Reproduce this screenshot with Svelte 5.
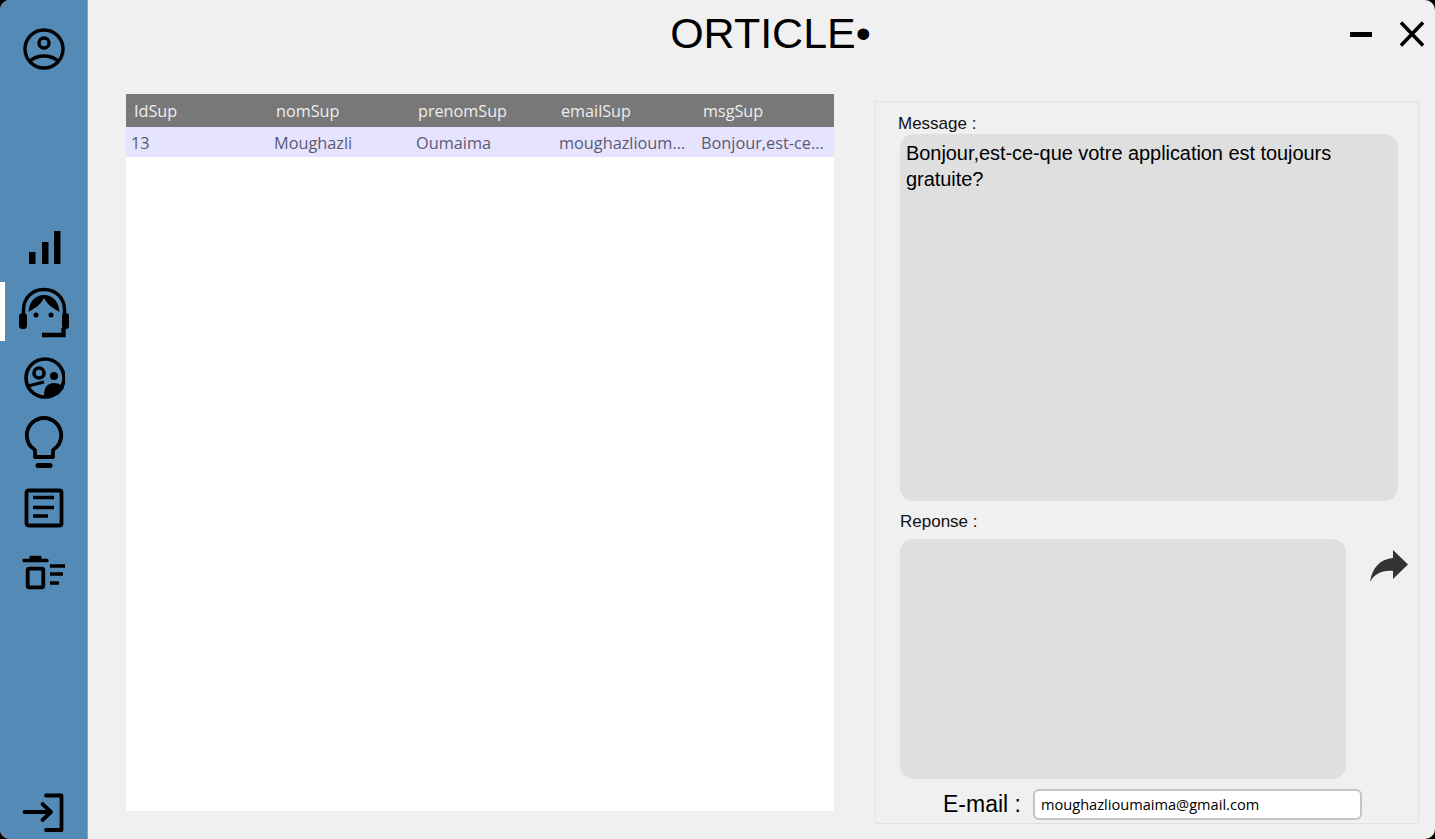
<script>
	const columns = ['IdSup', 'nomSup', 'prenomSup', 'emailSup', 'msgSup'];
	const rows = [
		['13', 'Moughazli', 'Oumaima', 'moughazlioum...', 'Bonjour,est-ce...']
	];
</script>

<div class="window">
	<aside class="sidebar">
		<button class="nav-btn profile" type="button" aria-label="Profil">
			<svg viewBox="0 0 42 42" width="42" height="42" fill="none" stroke="#000" stroke-width="3.400">
				<circle cx="21" cy="21" r="19" />
				<circle cx="21" cy="15" r="5" />
				<path d="M7 33C11 29.500 16 28 21 28s10 1.500 14 5" />
			</svg>
		</button>

		<nav class="nav-group">
			<button class="nav-btn" type="button" aria-label="Statistiques">
				<svg viewBox="0 0 42 42" width="42" height="42" fill="#000">
					<rect x="6" y="21" width="6.500" height="12" />
					<rect x="19" y="11" width="6.500" height="22" />
					<rect x="31" y="0" width="6.500" height="33" />
				</svg>
			</button>
			<button class="nav-btn active" type="button" aria-label="Support">
				<svg viewBox="0 0 52 52" width="52" height="52" fill="none" stroke="#000" stroke-width="3.400">
					<path d="M5.500 28v-5C5.500 11 14 2.500 26 2.500S46.500 11 46.500 23v5" />
					<path d="M10.500 25C11 15 17 8 26 8s15 7 15.500 17C37 22 30 19 26 11c-4 8-11 11-15.500 14z" fill="#000" stroke="none" />
					<circle cx="18" cy="28" r="2.500" fill="#000" stroke="none" />
					<circle cx="33" cy="28" r="2.500" fill="#000" stroke="none" />
					<rect x="1" y="26" width="8" height="16" rx="3.500" fill="#000" stroke="none" />
					<rect x="44" y="26" width="7" height="16" rx="3" fill="#000" stroke="none" />
					<path d="M24 48h21.500v-7" stroke-width="4.400" />
				</svg>
			</button>
			<button class="nav-btn" type="button" aria-label="Avis">
				<svg viewBox="0 0 42 42" width="42" height="42" fill="none" stroke="#000" stroke-width="3.600">
					<circle cx="22" cy="21" r="19" />
					<circle cx="16" cy="16" r="5" />
					<circle cx="31" cy="19" r="4" fill="#000" stroke="none" />
					<path d="M5 29l16-4" stroke-width="3" />
					<path d="M21 38c0-7 3-12 10-12 5 0 9 3 10 5l-5 6-8 4z" fill="#000" stroke="none" />
				</svg>
			</button>
			<button class="nav-btn" type="button" aria-label="Idees">
				<svg viewBox="0 0 42 52" width="42" height="52" fill="none" stroke="#000" stroke-width="3.800">
					<path d="M12 41v-7C6.500 30.500 3.800 25 3.800 19.500 3.800 10 11.500 2 21 2s17.200 8 17.200 17.500c0 5.500-2.700 11-8.200 14.500v7z" stroke-linejoin="round" />
					<path d="M15 49.500h12" stroke-width="5" stroke-linecap="round" />
				</svg>
			</button>
			<button class="nav-btn" type="button" aria-label="Articles">
				<svg viewBox="0 0 42 42" width="42" height="42" fill="none" stroke="#000">
					<rect x="3.500" y="3.500" width="35" height="35" rx="2" stroke-width="3.800" />
					<path d="M10 10.500h21M10 20.500h21M10 29h15" stroke-width="3.600" />
				</svg>
			</button>
			<button class="nav-btn" type="button" aria-label="Corbeille">
				<svg viewBox="0 0 46 36" width="46" height="36" fill="none" stroke="#000">
					<path d="M3 6.500h23M10 3.500h9" stroke-width="3.400" stroke-linecap="round" />
					<rect x="6.700" y="14.700" width="15.600" height="18.600" rx="1.500" stroke-width="3.800" />
					<path d="M29 12h15M29 20h13M29 29h9" stroke-width="3.600" />
				</svg>
			</button>
		</nav>

		<button class="nav-btn logout" type="button" aria-label="Deconnexion">
			<svg viewBox="0 0 44 40" width="44" height="40" fill="none" stroke="#000" stroke-width="3.800" stroke-linecap="round" stroke-linejoin="round">
				<path d="M2.500 19h26M20.500 11l8.500 8-8.500 8" />
				<path d="M24 2.500h15.500v34.500H24" />
			</svg>
		</button>
	</aside>

	<main class="main">
		<header class="topbar">
			<h1>ORTICLE<span class="dot">•</span></h1>
			<div class="win-actions">
				<button type="button" class="win-btn" aria-label="Reduire">
					<svg viewBox="0 0 22 22" width="22" height="22"><rect y="9" width="22" height="5" fill="#000" /></svg>
				</button>
				<button type="button" class="win-btn" aria-label="Fermer">
					<svg viewBox="0 0 26 26" width="26" height="26" fill="none" stroke="#000" stroke-width="3.600"><path d="M2 1.500l22 23M24 1.500l-22 23" /></svg>
				</button>
			</div>
		</header>

		<div class="content">
			<section class="table-wrap">
				<table>
					<thead>
						<tr>
							{#each columns as col}
								<th>{col}</th>
							{/each}
						</tr>
					</thead>
					<tbody>
						{#each rows as row}
							<tr>
								{#each row as cell}
									<td>{cell}</td>
								{/each}
							</tr>
						{/each}
					</tbody>
				</table>
			</section>

			<section class="panel">
				<div class="label">Message :</div>
				<div class="field message">Bonjour,est-ce-que votre application est toujours gratuite?</div>
				<div class="label reply-label">Reponse :</div>
				<div class="reply-row">
					<div class="field reply"></div>
					<button type="button" class="send" aria-label="Envoyer">
						<svg viewBox="0 0 38 32" width="38" height="32" fill="#333">
							<path d="M23 0l15 14.500L23 29v-8C13 20 5 23 0 32 2 18 10 9 23 8z" />
						</svg>
					</button>
				</div>
				<div class="email-row">
					<span class="email-label">E-mail :</span>
					<div class="email-input">moughazlioumaima@gmail.com</div>
				</div>
			</section>
		</div>
	</main>
</div>

<style>
	:global(body) {
		margin: 0;
		background: #000;
	}

	.window {
		display: flex;
		width: 1435px;
		height: 839px;
		overflow: hidden;
		border-radius: 10px;
		background: #f0f0f0;
		font-family: "Liberation Sans", Arial, sans-serif;
		color: #000;
	}

	button {
		padding: 0;
		border: none;
		background: none;
		display: flex;
	}

	.sidebar {
		position: relative;
		display: flex;
		flex-direction: column;
		align-items: center;
		flex: none;
		box-sizing: border-box;
		width: 88px;
		height: 100%;
		padding: 28px 0 6px;
		background: #548ab6;
		border-right: 1px solid #7fa8c9;
	}

	.nav-group {
		display: flex;
		flex-direction: column;
		align-items: center;
		margin-top: 137px;
	}

	.nav-btn {
		justify-content: center;
		align-items: center;
		width: 60px;
	}

	.nav-group .nav-btn:nth-child(1) { height: 44px; margin-top: 23px; }
	.nav-group .nav-btn:nth-child(2) { height: 52px; margin-top: 13px; }
	.nav-group .nav-btn:nth-child(3) { height: 42px; margin-top: 18px; }
	.nav-group .nav-btn:nth-child(4) { height: 52px; margin-top: 17px; }
	.nav-group .nav-btn:nth-child(5) { height: 42px; margin-top: 19px; }
	.nav-group .nav-btn:nth-child(6) { height: 36px; margin-top: 25px; }

	.active::before {
		content: '';
		position: absolute;
		left: 0;
		top: 282px;
		width: 5px;
		height: 59px;
		background: #fff;
	}

	.logout {
		margin-top: auto;
	}

	.main {
		display: flex;
		flex-direction: column;
		flex: 1;
		min-width: 0;
	}

	.topbar {
		position: relative;
		display: flex;
		justify-content: center;
		flex: none;
		height: 94px;
	}

	h1 {
		margin: 8px 0 0 18px;
		font-size: 43px;
		font-weight: 400;
		line-height: 50px;
	}

	.win-actions {
		position: absolute;
		top: 21px;
		right: 10px;
		display: flex;
		align-items: center;
		gap: 27px;
	}

	.content {
		display: flex;
		align-items: flex-start;
		flex: 1;
		min-height: 0;
		padding-left: 38px;
	}

	.table-wrap {
		flex: none;
		width: 708px;
		height: 717px;
		background: #fff;
	}

	table {
		width: 100%;
		table-layout: fixed;
		border-collapse: collapse;
		font-family: "Open Sans", sans-serif;
	}

	th, td {
		box-sizing: border-box;
	}

	th {
		height: 33px;
		padding: 0 8px;
		background: #787878;
		color: #eee;
		font-size: 16.200px;
		font-weight: 400;
		text-align: left;
	}

	th:nth-child(1) { width: 142px; }
	th:nth-child(2) { width: 142px; }
	th:nth-child(3) { width: 143px; }
	th:nth-child(4) { width: 142px; }

	td {
		height: 30px;
		padding: 1px 0 0 6px;
		background: #e6e3ff;
		color: #5c5a73;
		font-size: 16.300px;
		white-space: nowrap;
	}

	td:first-child {
		padding-left: 5px;
	}

	.panel {
		display: flex;
		flex-direction: column;
		flex: none;
		box-sizing: border-box;
		width: 544px;
		height: 723px;
		margin: 7px 0 0 41px;
		padding: 12px 0 0 24px;
		border: 1px solid #e2e2e2;
	}

	.label {
		font-size: 17px;
		line-height: 20px;
		color: #111;
		margin-left: -2px;
	}

	.field {
		box-sizing: border-box;
		background: #dfdfdf;
		border-radius: 14px;
	}

	.message {
		width: 498px;
		height: 367px;
		padding: 6px 40px 0 6px;
		font-size: 20px;
		line-height: 26px;
		letter-spacing: -0.06px;
	}

	.reply-label {
		margin: 11px 0 7px 0;
	}

	.reply-row {
		display: flex;
		align-items: flex-start;
		gap: 24px;
	}

	.reply {
		flex: none;
		width: 446px;
		height: 240px;
	}

	.send {
		margin-top: 11px;
	}

	.email-row {
		display: flex;
		align-items: center;
		margin: 10px 0 0 43px;
	}

	.email-label {
		width: 90px;
		font-size: 23px;
		line-height: 31px;
	}

	.email-input {
		box-sizing: border-box;
		width: 329px;
		height: 31px;
		padding-left: 6px;
		background: #fff;
		border: 2px solid #c4c4c4;
		border-radius: 6px;
		font-family: "Open Sans", sans-serif;
		font-size: 14.600px;
		line-height: 27px;
	}
</style>
